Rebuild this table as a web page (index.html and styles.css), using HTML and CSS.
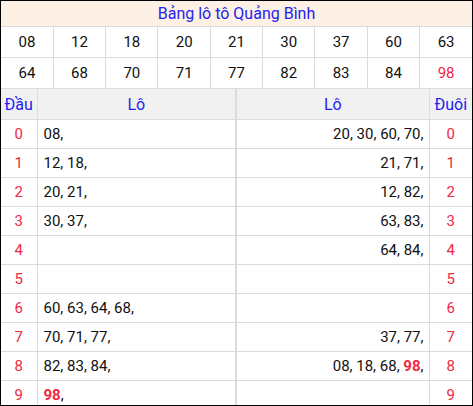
FILE: index.html
```html
<!DOCTYPE html>
<html lang="vi">
<head>
<meta charset="utf-8">
<title>Bảng lô tô Quảng Bình</title>
<link rel="stylesheet" href="styles.css">
</head>
<body>
<div class="frame">
  <div class="title">Bảng lô tô Quảng Bình</div>
  <table class="nums">
    <tr><td>08</td><td>12</td><td>18</td><td>20</td><td>21</td><td>30</td><td>37</td><td>60</td><td>63</td></tr>
    <tr><td>64</td><td>68</td><td>70</td><td>71</td><td>77</td><td>82</td><td>83</td><td>84</td><td class="hot">98</td></tr>
  </table>
  <table class="loto">
    <colgroup><col class="c-dau"><col class="c-lo1"><col class="c-lo2"><col class="c-duoi"></colgroup>
    <tr class="head"><th>Đầu</th><th class="mid">Lô</th><th>Lô</th><th>Đuôi</th></tr>
    <tr><td class="d">0</td><td class="l mid">08,</td><td class="r">20, 30, 60, 70,</td><td class="d">0</td></tr>
    <tr><td class="d">1</td><td class="l mid">12, 18,</td><td class="r">21, 71,</td><td class="d">1</td></tr>
    <tr><td class="d">2</td><td class="l mid">20, 21,</td><td class="r">12, 82,</td><td class="d">2</td></tr>
    <tr><td class="d">3</td><td class="l mid">30, 37,</td><td class="r">63, 83,</td><td class="d">3</td></tr>
    <tr><td class="d">4</td><td class="l mid"></td><td class="r">64, 84,</td><td class="d">4</td></tr>
    <tr><td class="d">5</td><td class="l mid"></td><td class="r"></td><td class="d">5</td></tr>
    <tr><td class="d">6</td><td class="l mid">60, 63, 64, 68,</td><td class="r"></td><td class="d">6</td></tr>
    <tr><td class="d">7</td><td class="l mid">70, 71, 77,</td><td class="r">37, 77,</td><td class="d">7</td></tr>
    <tr><td class="d">8</td><td class="l mid">82, 83, 84,</td><td class="r">08, 18, 68, <b class="hot">98</b>,</td><td class="d">8</td></tr>
    <tr><td class="d">9</td><td class="l mid"><b class="hot">98</b>,</td><td class="r"></td><td class="d">9</td></tr>
  </table>
</div>
</body>
</html>
```
FILE: styles.css
```css
html, body {
  margin: 0;
  padding: 0;
  background: #fff;
}
body {
  font-family: Roboto, "Liberation Sans", sans-serif;
  font-size: 15px;
  color: #111;
}
.frame {
  box-sizing: border-box;
  width: 473px;
  height: 406px;
  border: 1px solid #000;
  overflow: hidden;
}
.title {
  height: 25px;
  line-height: 25px;
  text-align: center;
  font-size: 16px;
  color: #2222f5;
  background: #fdf0e4;
  border-bottom: 1px solid #dcdcdc;
}
table {
  width: 471px;
  border-collapse: collapse;
  table-layout: fixed;
}
td, th {
  padding: 0;
  border-right: 1px solid #dcdcdc;
  border-bottom: 1px solid #dcdcdc;
}
td:last-child, th:last-child {
  border-right: 0;
}
.nums td {
  height: 30px;
  text-align: center;
}
.hot {
  color: #f0283f;
}
b.hot {
  font-weight: 700;
}
.c-dau { width: 36px; }
.c-lo1 { width: 199px; }
.c-lo2 { width: 193px; }
.c-duoi { width: 43px; }
.head th {
  height: 30px;
  font-weight: 400;
  font-size: 16px;
  color: #2222f5;
  background: #f1f1f1;
}
.loto td {
  height: 28px;
}
.loto .mid {
  border-right: 2px solid #dcdcdc;
}
.d {
  text-align: center;
  color: #f0283f;
}
.l {
  text-align: left;
  padding-left: 6px;
}
.r {
  text-align: right;
  padding-right: 5px;
}
```
